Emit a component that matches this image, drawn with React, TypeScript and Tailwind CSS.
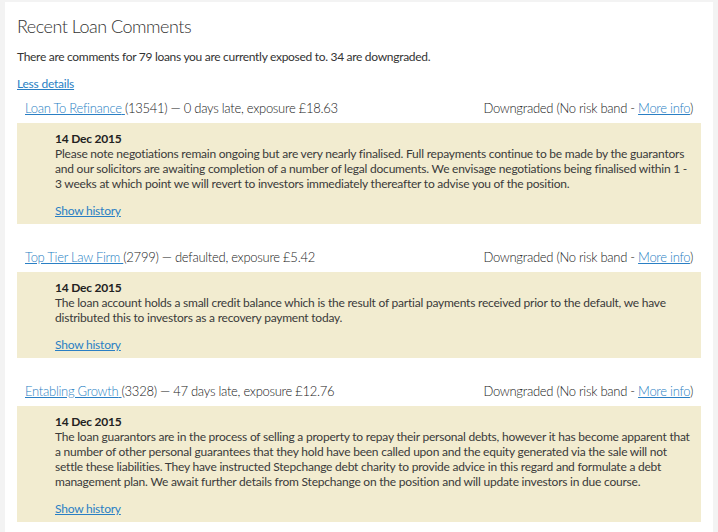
import React from "react";

type Loan = {
  name: string;
  id: string;
  status: string;
  lines: string[];
};

const loans: Loan[] = [
  {
    name: "Loan To Refinance",
    id: "13541",
    status: "0 days late, exposure £18.63",
    lines: [
      "Please note negotiations remain ongoing but are very nearly finalised. Full repayments continue to be made by the guarantors",
      "and our solicitors are awaiting completion of a number of legal documents. We envisage negotiations being finalised within 1 -",
      "3 weeks at which point we will revert to investors immediately thereafter to advise you of the position.",
    ],
  },
  {
    name: "Top Tier Law Firm",
    id: "2799",
    status: "defaulted, exposure £5.42",
    lines: [
      "The loan account holds a small credit balance which is the result of partial payments received prior to the default, we have",
      "distributed this to investors as a recovery payment today.",
    ],
  },
  {
    name: "Entabling Growth",
    id: "3328",
    status: "47 days late, exposure £12.76",
    lines: [
      "The loan guarantors are in the process of selling a property to repay their personal debts, however it has become apparent that",
      "a number of other personal guarantees that they hold have been called upon and the equity generated via the sale will not",
      "settle these liabilities. They have instructed Stepchange debt charity to provide advice in this regard and formulate a debt",
      "management plan. We await further details from Stepchange on the position and will update investors in due course.",
    ],
  },
];

function LoanItem({ loan, first }: { loan: Loan; first: boolean }) {
  return (
    <div className={first ? "mt-[6px]" : "mt-[23px]"}>
      <div className="flex h-[20px] items-center justify-between px-2 text-[13px] font-light leading-[20px] tracking-[-0.28px] text-[#222]">
        <div>
          <a href="#" className="text-[#2a7fc4] underline">
            {loan.name}{" "}
          </a>
          ({loan.id}) — {loan.status}
        </div>
        <div>
          Downgraded (No risk band -{" "}
          <a href="#" className="text-[#2a7fc4] underline">
            More info
          </a>
          )
        </div>
      </div>
      <div className="mt-[5px] bg-[#f2ecd0] pb-[6px] pl-[38px] pr-2 pt-2 text-[12px] leading-[15px] tracking-[-0.22px] text-[#3a3a3a]">
        <div className="font-bold text-[#222]">14 Dec 2015</div>
        <div>
          {loan.lines.map((l, i) => (
            <div key={i} className="whitespace-nowrap">
              {l}
            </div>
          ))}
        </div>
        <div className="mt-3">
          <a href="#" className="text-[#2a7fc4] underline">
            Show history
          </a>
        </div>
      </div>
    </div>
  );
}

export default function App() {
  return (
    <div
      className="min-h-[532px] bg-[#f3f3f3] pl-[5px] pt-[2px]"
      style={{ fontFamily: "Lato, 'Open Sans', sans-serif" }}
    >
      <div className="min-h-[530px] w-[708px] bg-white px-[12px] pt-[12px]">
        <h1 className="h-[24px] text-[18px] font-light leading-[24px] tracking-[-0.5px] text-[#333]">
          Recent Loan Comments
        </h1>
        <p className="mt-[11px] text-[12px] leading-[16px] tracking-[-0.3px] text-[#333]">
          There are comments for 79 loans you are currently exposed to. 34 are downgraded.
        </p>
        <div className="mt-[11px] text-[12px] leading-[16px] tracking-[-0.22px]">
          <a href="#" className="text-[#2a7fc4] underline">
            Less details
          </a>
        </div>
        {loans.map((l, i) => (
          <LoanItem key={l.id} loan={l} first={i === 0} />
        ))}
      </div>
    </div>
  );
}
